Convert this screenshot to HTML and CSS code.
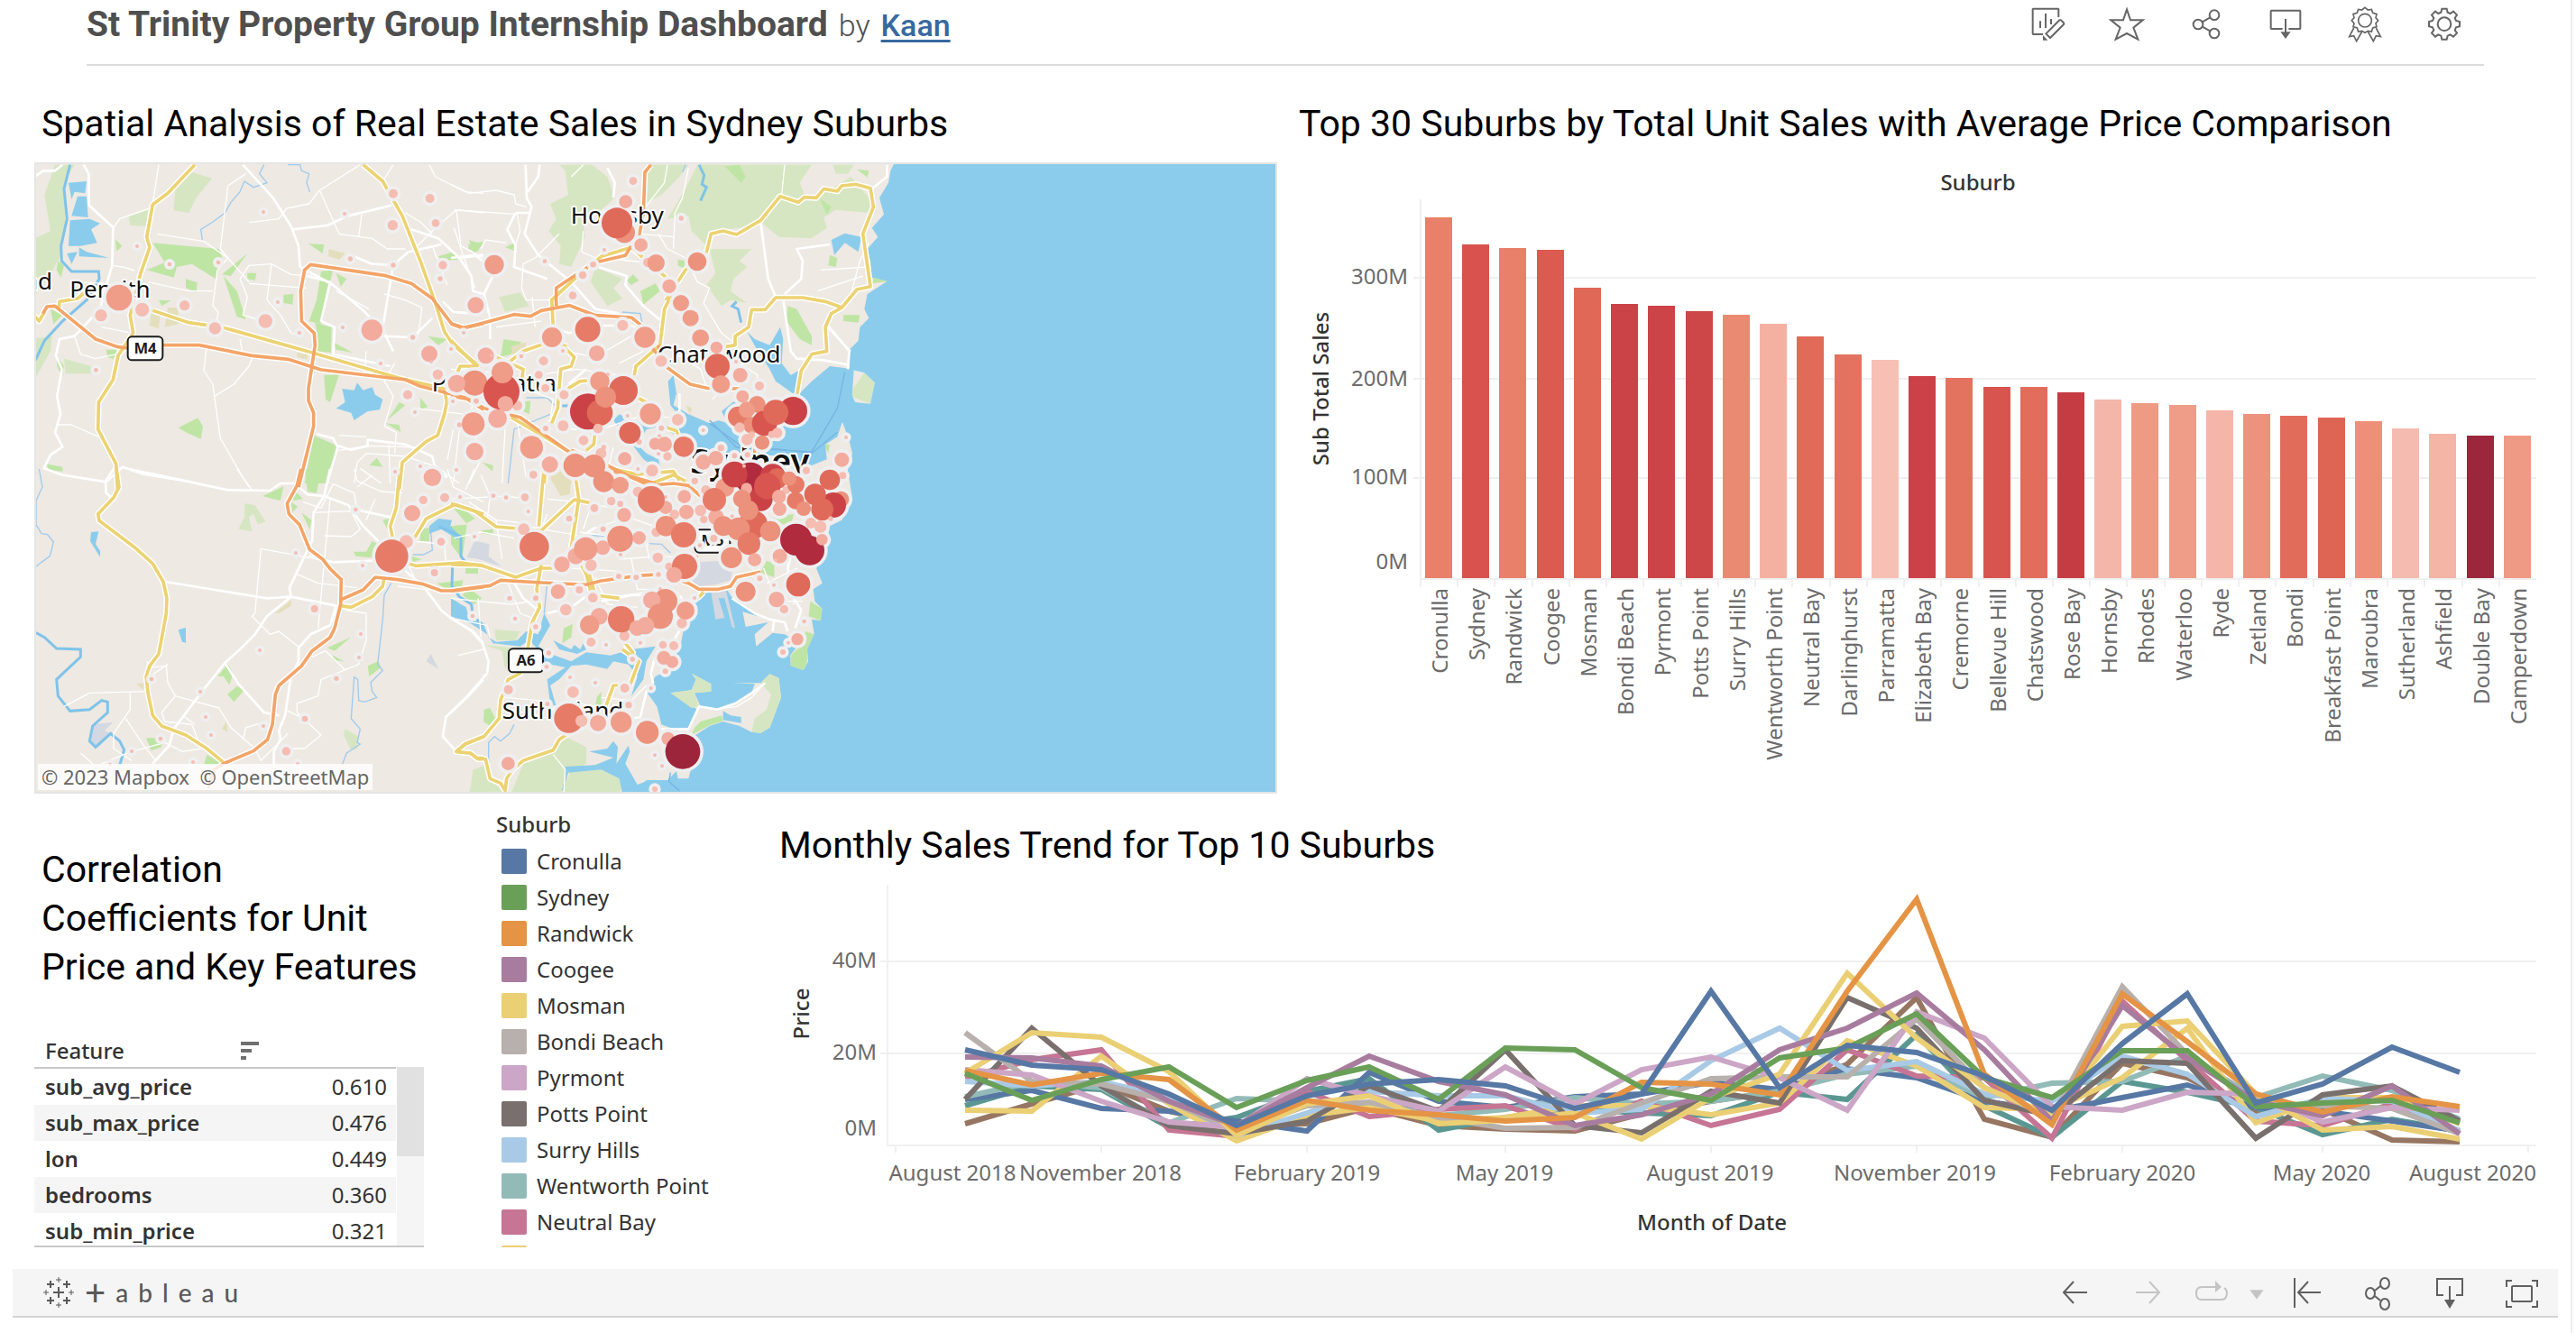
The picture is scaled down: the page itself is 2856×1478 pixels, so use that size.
FILE: index.html
```html
<!DOCTYPE html>
<html lang="en">
<head>
<meta charset="utf-8">
<meta name="viewport" content="width=device-width, initial-scale=1">
<title>St Trinity Property Group Internship Dashboard</title>
<link rel="stylesheet" href="styles.css">
</head>
<body>
<div class="page">
  <header class="header">
    <div class="heading">
      <h1 class="heading-title">St Trinity Property Group Internship Dashboard</h1>
      <span class="heading-by">by</span>
      <a class="heading-author" href="#author">Kaan</a>
    </div>
    <div class="header-actions">
      <button class="icon-button" type="button" aria-label="Edit"><svg class="icon" viewBox="0 0 120 120"><path d="M97 36V10Q97 8 95 8H13Q11 8 11 10V91Q11 93 13 93H45M36 49V72M54 24V72M72 42V60M55 91L100 46Q103 44 106 47L113 54Q116 57 114 60L69 105Z"/><path class="solid" d="M45 96V113H61Z"/></svg></button>
      <button class="icon-button" type="button" aria-label="Favorite"><svg class="icon" viewBox="0 0 120 120"><path d="M60 10L72 46H113L82 71L97 110L60 90L23 110L38 71L7 46H48Z"/></svg></button>
      <button class="icon-button" type="button" aria-label="Share"><svg class="icon" viewBox="0 0 120 120"><circle cx="33" cy="60" r="16"/><circle cx="87" cy="29" r="16"/><circle cx="87" cy="90" r="16"/><path d="M47 52L73 37M47 68L73 82"/></svg></button>
      <button class="icon-button" type="button" aria-label="Download"><svg class="icon" viewBox="0 0 120 120"><path d="M50 75H13Q11 75 11 73V16Q11 14 13 14H107Q109 14 109 16V73Q109 75 107 75H70M60 42V88"/><path class="solid" d="M43 85H77L60 108Z"/></svg></button>
      <button class="icon-button" type="button" aria-label="Badge"><svg class="icon badge" viewBox="0 0 120 120"><circle cx="60" cy="47" r="22"/><path d="M60 4L70 12L82 10L86 22L99 26L96 38L104 47L96 57L99 68L86 72L82 84L70 82L60 88L50 82L38 84L34 72L21 68L24 57L16 47L24 38L21 26L34 22L38 10L50 12Z"/><path d="M23 72L8 101L23 98L32 116L50 84M97 72L112 101L97 98L88 116L70 84"/></svg></button>
      <button class="icon-button" type="button" aria-label="Settings"><svg class="icon" viewBox="0 0 120 120"><circle cx="60" cy="59" r="22"/><path d="M49 20L52 8H68L71 20L80 24L90 17L102 29L95 39L99 48L111 51V67L99 70L95 79L102 89L90 101L80 94L71 98L68 110H52L49 98L40 94L30 101L18 89L25 79L21 70L9 67V51L21 48L25 39L18 29L30 17L40 24Z"/></svg></button>
    </div>
  </header>

  <main>
    <div class="row row-top">
      <section class="panel map-panel">
        <h2 class="panel-title">Spatial Analysis of Real Estate Sales in Sydney Suburbs</h2>
        <div class="map">
        <svg class="chart" viewBox="6 6 4122 2088" role="img" aria-label="Map of Sydney with sales bubbles">
          <defs>
            <g id="minor-roads">
              <g transform="translate(-6 -12)">
                <path d="M420 20L400 150M710 50L650 90L625 300L650 330L615 370L600 490L618 510L610 560M720 212L820 200L845 165L920 150L955 105L1090 20M955 105L1020 250L1130 265L1180 300L1240 300M1095 185L1085 260M270 228L290 200L390 165M415 250L570 275L650 330L720 410M690 400L720 355L795 350L860 385L930 390M720 415L910 430M795 350L780 470L825 520L860 580L900 590M690 400L715 460L700 520L770 540M230 560L320 578M265 355L300 360L340 372M130 410L250 415M385 410L520 440L600 440M580 620L570 705L600 750L605 790L625 930L700 1060L720 1092M605 790L670 750L720 690L735 655M690 600L700 650M80 885L130 885L220 925M1320 20L1340 60L1440 110L1500 115M1500 180L1410 170L1340 230L1280 290M1410 170L1425 290L1500 330M1330 290L1380 420M1010 440L1120 500M1170 450L1240 470L1295 495L1290 540L1280 600M1110 640L1105 710M1205 680L1170 740L1200 790L1170 890L1210 910L1205 980M1270 830L1440 850M1020 920L1110 925M1020 970L1120 955L1290 960M1070 1080L1080 1010L1110 980L1240 990L1330 1020M1090 1030L1160 1080M1400 900L1380 1000M1185 950L1190 1080M1420 900L1400 1080M1340 1020L1420 1080M1200 20L1165 75M1240 180L1290 210L1330 250M140 590L160 650L210 665L280 650"/>
              </g>
              <g transform="translate(1386 -12)">
                <path d="M0 85L60 115L150 105L210 120L215 150L250 160M10 170L220 185L230 240L210 300M100 300L115 270L185 280M80 430L40 320L10 230M360 250L280 330L240 350L235 430L250 470L330 470M440 240L435 310L480 330M500 330L650 345M720 20L710 80L640 170L630 250L740 260M790 30L770 130L745 180L740 300M690 250L720 300L780 330L820 410L860 430L840 480L900 580L950 620M1110 20L1100 120L1030 200M1390 280L1360 340L1330 450L1300 495M1250 560L1330 640M1230 370L1390 360M1220 440L1370 390M0 700L130 710L200 780M120 720L60 850L100 1000L60 1080M240 980L350 1010M230 760L340 800L330 870M380 640L480 660L600 590M150 560L300 540M270 460L280 560M210 730L420 700L560 720M320 870L400 900L470 900M220 870L250 1060M180 900L170 1080M500 900L620 860L740 860M540 960L520 1040L650 1060M750 650L830 700L850 760M960 680L1020 720L1010 800L1070 830M560 680L640 640M960 700L870 800M440 20L400 60"/>
              </g>
              <g transform="translate(-6 1020)">
                <path d="M760 265L1000 310M760 265L740 480L730 490L790 550L820 540L885 592M880 350L950 380L1080 395M990 100L950 530M900 110L960 130L1000 50L1070 80L1080 140M930 145L1060 140L1090 200L1060 225L970 222M1140 100L1110 170M1070 0L1080 40L1160 75L1230 80M1130 20L1080 60M1040 470L1110 480L1110 570L1085 650L1040 668L975 605L930 625M1040 668L960 700L950 755L880 780L880 810L960 885L905 930L840 930M840 800L900 830M680 0L730 70M380 640L395 660L445 655L450 710L475 755L620 795L660 860L740 930L760 970L850 880M475 755L430 810L440 840L530 850L550 900M500 820L540 850M190 745L380 740M105 790L190 745M325 745L325 800L270 880L270 930L330 970M310 830L370 920L410 970M160 945L200 980M230 980L330 940L440 910L500 940L560 930M700 900L710 860L780 840M450 650L390 690M1215 390L1350 405M1250 320L1280 380M1260 240L1370 250L1375 310M1340 370L1330 340M1470 0L1440 70M1380 0L1400 60L1500 110M1415 620L1500 600"/>
              </g>
              <g transform="translate(1386 1020)">
                <path d="M0 100L90 95L180 90L260 100M60 110L150 170L240 180M100 20L130 90L120 170M10 230L100 210L210 230M150 170L170 300M0 430L90 440L200 450L270 440M20 500L120 520L130 560M90 430L100 560M190 380L230 480L280 500M320 150L300 200L420 220M320 100L430 110L540 130M430 210L580 230L660 250M400 330L560 340M470 200L590 160L700 200M460 140L440 200M500 430L650 410L660 480M480 360L520 450L620 460M600 300L620 400L700 400M560 300L700 290L820 300M640 200L660 300M770 100L780 190L860 200M850 100L860 200M900 160L920 300M700 350L760 360M740 520L770 500L800 480M1040 330L1080 440L1170 440M1050 380L1150 330L1140 450M180 760L290 770L330 780M200 800L330 830M500 760L600 770L650 720M420 780L550 800M340 950L380 1000L375 1080M1040 715L1000 760L950 790L880 800M700 400L740 420L750 520"/>
              </g>
            </g>
            <g id="main-roads">
              <g transform="translate(-6 -12)">
                <path d="M0 65L35 40L75 40L100 20M170 20L187 50L188 155L268 228L265 355L240 440L225 500L140 590L90 600L78 655L98 700L82 790L93 850L75 910L100 958L60 985L38 1030L100 1052L245 1075L300 1025L365 1048L500 1070M700 20L800 130L860 225L885 290L890 360L1000 420L1095 500L1165 570L1200 640M865 235L980 222L1050 190L1195 155M1057 320L1130 350L1200 354L1250 310L1360 285M1260 235L1350 265L1420 330L1460 390L1465 440L1500 450M1200 354L1165 560M895 385L990 410L960 540L1005 560L1000 650L1190 690M1150 590L1265 594L1330 530M945 915L1000 930L1015 960L980 1080M1015 955L1060 968L1115 955L1115 935L1240 950L1330 990L1340 1030L1380 1060M1365 475L1400 510L1470 515M1420 330L1500 320"/>
              </g>
              <g transform="translate(1386 -12)">
                <path d="M248 20L252 130L268 160L245 250L290 320L400 410L480 500L560 515M295 20L290 60L255 110M215 180L265 180M215 180L187 235L215 290L210 360L320 400M0 330L80 320L130 360L144 380L110 450L130 530L130 600M520 30L545 80L540 130M490 360L585 390L580 420L640 490L700 540M1030 210L1055 400L1080 460M1110 450L1165 400L1170 340L1150 300L1260 285M1105 470L1130 640L1150 665L1240 670L1320 685M1250 550L1325 640L1320 700M1450 20L1450 60L1400 100M760 780L760 840M390 750L450 700M340 500L340 560L390 580L500 555L600 555L660 580"/>
              </g>
              <g transform="translate(-6 1020)">
                <path d="M270 0L243 40L245 80L270 100M320 0L500 38L650 70L790 72L825 48L870 48L915 85L970 90L990 0M970 90L935 145L930 240L905 290L855 395L860 425L780 490L740 550L690 600L640 645L560 745L470 865L455 920L400 980M440 375L780 430L860 425L1010 455L990 520L925 550L885 595L885 640L860 690L840 820L820 870L825 900L803 940L803 990M920 290L1000 310L1140 305M970 90L1050 120L1100 190L1150 240M1075 135L1190 160M640 645L685 715L770 810L820 820M1230 330L1300 390L1360 470L1390 495L1465 540L1500 580M1500 700L1450 755L1375 825L1365 890L1410 940"/>
              </g>
              <g transform="translate(1386 1020)">
                <path d="M0 495L70 540L105 580L125 640L120 680L55 755L0 810M320 480L400 460L480 400M500 440L600 420L700 420M480 195L440 220L420 290M200 360L240 430L290 470M935 430L1010 480L1060 500L1110 510L1120 540M1070 540L1075 500M1130 290L1120 330L1140 430L1165 470L1145 530M730 400L770 430M770 520L730 590L680 620L665 680L672 710L650 740L630 825L600 830M690 865L790 865L825 790L885 800L945 780L1000 745L1045 712"/>
              </g>
            </g>
            <g id="yellow-roads">
              <g transform="translate(-6 -12)">
                <path d="M540 20L450 115L400 152L380 260L390 295L360 380L325 520L335 580L285 655L268 735L220 810L218 900L278 1015L283 1100M400 505L520 545L640 563L930 645L1220 730L1370 765L1378 810L1370 850L1348 920L1310 940L1230 1010L1220 1100M1100 20L1165 75L1230 190L1290 340L1340 480L1370 575L1400 620L1485 690M0 515L22 540L40 510M88 500L90 475L150 465L180 440"/>
              </g>
              <g transform="translate(1386 -12)">
                <path d="M0 605L85 690L30 690L22 710M150 660L240 700L235 740M340 590L410 660L400 690L365 700L355 830L335 880M195 675L240 640L340 605L385 625M340 560L335 470L400 410L450 365L500 325L600 295L640 330L710 390L740 425L725 470L710 500L695 620L615 690L610 720M715 470L780 370L815 340L850 310L865 250L905 240L950 252L1030 205L1095 125L1155 145L1175 128L1215 130L1240 100L1285 108L1300 90L1345 85L1395 98L1405 160L1370 250L1395 425L1350 435L1300 495L1245 475L1170 462L1080 462L1045 502L1000 502L990 560L945 590L945 620L915 625M1300 495L1265 515L1245 560L1250 640L1200 650L1165 705L1150 790M380 770L430 740L500 735L650 810M200 860L320 930L400 980M310 1080L315 1020M450 970L475 950L480 900M530 1030L620 1050L740 1040L760 1070M720 895L750 905L760 930"/>
              </g>
              <g transform="translate(-6 1020)">
                <path d="M278 -10L288 60L270 95L218 150L222 172L345 265L400 315L435 375L447 430L445 480L420 615L390 655L378 690L385 750L400 820L430 855L510 885L580 930L640 980M1222 0L1210 130L1190 190L1200 240M1270 230L1310 165L1405 118L1500 150M1250 315L1275 322L1425 312L1500 322M1170 360L1165 390L1130 425L1060 460L1025 455M1500 890L1440 915L1410 940L1455 945L1480 962L1500 962"/>
              </g>
              <g transform="translate(1386 1020)">
                <path d="M0 115L80 140L150 192L300 205L410 102L460 112M310 -10L292 190M0 318L100 320L215 360L300 330L350 330M410 0L425 100L400 260L450 350L465 410M300 320L285 400L295 460L270 510L255 600L230 680L190 700L165 770L160 830L110 890L45 915L18 940L65 945L90 965L115 965L130 1030L165 1045L180 1070L185 1030L205 1000L240 970L340 935L360 900L390 880M580 580L605 610L595 640M570 600L625 640L595 720L540 720L515 790M460 350L480 420L560 430M660 50L740 20L780 40M840 410L820 430"/>
              </g>
            </g>
            <g id="orange-roads">
              <g transform="translate(-6 -12)">
                <path d="M35 515L48 492L75 490L210 600L280 625L315 630M435 620L555 620L730 655L850 667L960 702L1240 735L1290 757L1440 795L1500 835M885 1092L935 890L935 845L918 805L918 765L940 620L937 580L895 540L892 440L905 370L925 352L1170 388L1260 415L1330 465L1395 550L1430 563L1500 548"/>
              </g>
              <g transform="translate(1386 -12)">
                <path d="M0 548L45 563L210 518L265 524L300 505L395 488L480 521L600 528L640 560M350 490L350 430L410 390L480 345L580 322L600 290M665 20L645 45L640 180L625 260M640 590L720 695L795 750L850 763L960 765M0 790L60 800L110 830L230 860L400 980M400 970L480 1000L600 1060L660 1080M690 620L700 680M1010 800L1010 990M540 1040L680 1080"/>
              </g>
              <g transform="translate(-6 1020)">
                <path d="M893 0L880 55L847 115L853 150L888 185L922 268L965 300L990 332L1027 368L1025 450L1005 530L990 560L930 605L895 655L820 720L808 750L798 850L782 900L735 938L640 978L605 1000L585 1060M1025 435L1100 402L1140 360L1215 368L1300 383L1360 405L1405 405L1500 392"/>
              </g>
              <g transform="translate(1386 1020)">
                <path d="M0 405L130 388L165 370L300 378L450 385L500 372L620 355L700 350L790 380L825 400L890 400L930 390L950 360L1030 342M540 0L660 55L740 48L790 55L830 90M820 290L770 350"/>
              </g>
            </g>
          </defs>

          <rect class="land" width="4134" height="2100"/>

          <g class="forest">
            <path transform="translate(-6 -12)" d="M75 20H140L105 80L110 230L95 320L50 400L15 440L0 500V270L60 240L40 120ZM530 45L597 65L545 130L520 180L470 172L475 100ZM320 190L385 165L380 225L325 222ZM105 665L195 690L200 715L110 715ZM0 600L65 590L60 640L15 720L0 740Z"/>
            <path transform="translate(1386 -12)" d="M470 20L520 60L545 130L500 170L440 200L445 260L400 360L360 350L365 290L325 240L350 200L330 150L390 120L380 40L360 20ZM660 20H790L760 60L700 120L645 150L640 70ZM820 20H1200L1160 80L1180 130L1250 110L1330 60L1400 140L1395 180L1280 170L1240 195L1250 230L1200 265L1090 260L1030 210L960 230L860 240L850 290L800 240L790 190L720 200L780 100ZM1270 20H1340L1320 50L1280 50ZM860 300L1000 300L960 340L985 360L940 400L930 440L985 480L930 470L900 490L850 420L880 380ZM480 360L570 400L540 430L570 465L520 490L465 410ZM160 460L230 445L260 490L180 510ZM1340 760L1375 712L1410 745L1395 815L1330 790Z"/>
            <path transform="translate(-6 1020)" d="M705 115L740 120L775 175L750 185L735 150L720 160L730 208L685 200L705 160ZM1040 865L1085 890L1080 930L1060 935L1035 885ZM1500 990L1465 1000L1455 1080H1500Z"/>
            <path transform="translate(1386 1020)" d="M145 535L230 540L215 570L150 570ZM110 585L250 600L190 640L180 665L170 605ZM80 1000L120 980L150 1050L180 1080H60ZM240 980L340 940L380 890L450 925L450 980L390 1010L380 1080H200ZM400 1000L540 970L580 1030L560 1080H370Z"/>
          </g>
          <g class="park">
            <path transform="translate(-6 -12)" d="M400 280L620 300L630 325L610 400L570 375L530 350L480 360L470 395L380 370L440 345ZM510 400L548 412L545 445L510 430ZM635 390L680 440L710 535L680 525ZM715 315L660 390L630 385L690 335ZM715 380H745L740 405L715 400ZM835 452L868 450L865 485L835 480ZM275 268L298 290L280 308ZM918 283L970 285L965 315ZM960 375L1000 370L985 430L960 550L920 540L945 470ZM940 545L995 560L993 645L945 640L950 600ZM1010 380L1045 400L1025 425ZM970 720L1020 718L990 810L975 800ZM1450 285L1500 275L1480 310L1450 300ZM1350 325L1400 310L1415 335L1360 340ZM935 920L1015 955L975 1080H905ZM485 895L550 862L567 890L560 932L510 910ZM1180 870L1240 820L1220 810ZM1175 880L1220 885L1225 910ZM1290 795L1315 825L1290 835ZM1120 1020L1145 995L1165 1025ZM1315 590L1380 600L1350 620ZM80 655L105 690L98 725L82 690ZM245 635H280L270 665L250 660ZM60 500L100 520L70 550ZM420 470L460 472L430 490ZM45 1015L100 1025L100 1040L55 1035ZM85 340L105 355L95 395L80 370ZM1000 610L1065 645L1010 635Z"/>
            <path transform="translate(1386 -12)" d="M60 270L105 285L75 315ZM180 295L210 280L210 305ZM175 600L235 610L200 650L165 660ZM910 25L960 20L980 60L965 80ZM1120 490L1150 500L1200 590L1200 620L1160 600L1115 540ZM1225 130L1265 160L1250 185ZM1260 320L1285 330L1280 360L1255 355ZM1305 520H1360L1355 545L1305 540ZM1350 35L1390 40L1385 62ZM630 440L680 415L695 440L640 485ZM585 405L605 385L625 405L600 420ZM755 335L780 340L775 365L755 355ZM105 1010L140 1020L138 1040ZM240 810L265 805L260 850L240 840ZM1240 950L1260 950L1255 980Z"/>
            <path transform="translate(-6 1020)" d="M905 0H960L945 80L915 75ZM765 90L835 58L825 105L800 100ZM870 70L900 100L865 105ZM860 110L882 125L865 145ZM895 145L928 170L922 200ZM1068 275L1110 275L1130 240L1150 250L1130 295L1075 290ZM615 690L650 648L668 680L655 718L635 690ZM648 750L680 722L705 735L670 775ZM378 895L425 895L430 925L395 937ZM580 950L640 985H570ZM980 595L1058 560L1005 605ZM1000 620L1035 640L1000 635ZM1115 655L1150 640L1160 660L1120 690ZM1400 130L1440 135L1470 165L1445 180ZM1395 190L1445 185L1430 290L1400 250ZM1345 380L1430 370L1425 395H1370ZM1440 330L1480 325V345L1440 348ZM1450 395L1495 430L1470 450L1430 420ZM1290 200L1320 195V240L1290 240ZM1165 170L1185 165L1180 200ZM1260 290L1295 300L1265 310Z"/>
            <path transform="translate(1386 1020)" d="M10 130L40 135L80 165L50 180ZM0 190L50 185L30 290L0 250ZM0 380L40 370L35 395ZM55 330L90 325V348L50 348ZM375 530L405 515L400 560L370 580ZM110 800L130 795L148 830L130 855L108 840ZM485 760L500 740L500 800L480 790ZM1050 305L1075 315L1075 360L1030 345ZM1070 160L1140 150L1130 190L1090 180ZM1195 440L1235 465L1230 505L1190 490ZM1180 540L1208 550L1185 600V640L1172 670L1130 655V620L1160 590ZM100 205L140 200L140 220L105 215Z"/>
          </g>
          <g class="sand">
            <path transform="translate(-6 -12)" d="M985 300L1040 315L1020 335L985 325ZM395 505L425 515L420 565L390 555ZM450 495H485V550L440 560ZM880 645L915 650V668L880 660Z"/>
            <path transform="translate(1386 -12)" d="M200 625L250 610L245 640L205 655ZM330 1050L400 1030V1080H340ZM780 820L803 830L795 850Z"/>
            <path transform="translate(-6 1020)" d="M805 480L862 435L860 455L820 480ZM345 715L372 710L368 735ZM630 865L645 840L650 875Z"/>
            <path transform="translate(1386 1020)" d="M330 30L400 25L395 85L365 90Z"/>
          </g>
          <g class="built">
            <path transform="translate(-6 1020)" d="M200 850L268 842L240 870L260 880L220 925L195 915ZM1310 640L1325 615L1350 665ZM1470 240L1500 245V300L1445 295Z"/>
            <path transform="translate(1386 1020)" d="M80 240L128 250L125 290L170 325L60 290ZM820 310L900 305L935 340L930 370L880 385L820 390L800 370Z"/>
          </g>

          <g class="water">
            <path transform="translate(-6 -12)" d="M120 80L180 75L175 115L140 110L130 135ZM150 125H180L185 195L130 190ZM125 205L190 200L225 215L195 235L215 280L160 290H120ZM115 315L150 310L130 350ZM155 295L180 310L255 330L155 325ZM1010 830L1040 810L1030 765L1070 770L1080 745L1100 770L1130 760L1140 785L1165 800L1155 835L1115 840L1070 870L1060 845Z"/>
            <path transform="translate(-6 1020)" d="M195 210L220 208L210 250L225 272V293L192 240ZM485 535L510 528V578L498 575ZM1320 190L1350 165L1395 170L1390 190L1420 220L1415 235L1360 200L1320 215Z"/>
            <path transform="translate(1386 -12)" d="M1482 0L1462 40L1455 80L1425 130L1440 185L1400 230L1420 260L1385 300L1395 340L1400 395L1450 408L1385 450L1375 500L1390 530L1360 560L1355 605L1325 635L1325 700L1375 712L1410 745L1395 815L1345 810L1325 770L1300 870L1325 940L1335 980L1320 1040L1328 1080H2748V0ZM1265 270L1310 248L1365 260L1355 310L1310 280L1275 320Z"/>
            <path transform="translate(1386 -12)" d="M985 575L1010 600L1060 620L1095 560L1105 600L1100 680L1130 720L1165 700L1160 780L1200 740L1260 690L1340 700L1330 850L1300 880L1285 925L1245 950L1250 1000L1200 1020L1120 995L1050 985L960 990L900 975L850 990L790 1000L780 940L700 890L650 900L620 950L650 980L690 1000L700 1040L640 1000L610 960L540 870L560 850L600 870L640 880L740 890L770 870L730 820L722 740L740 720L750 780L740 820L790 850L860 880L890 870L920 880L900 840L950 800L1000 810L1060 800L1150 790L1080 740L1060 700L1020 640Z"/>
            <path transform="translate(1386 1020)" d="M1320 0L1335 100L1300 170L1260 190L1245 270L1215 330L1235 380L1205 400L1210 440L1235 465L1230 505L1200 500L1208 550L1185 600L1188 640L1172 670L1130 655L1128 620L1160 580L1110 550L1070 545L1015 590L1010 550L1055 510L980 525L970 475L1020 490L940 435L920 405L830 415L780 500L765 580L730 665L680 690L650 740L685 790L700 850L740 865H790L820 800L730 745L800 735L815 700L800 680L865 715V740L810 745L830 790L880 800L950 780L1000 745L1010 715L935 712H1030L1060 682L1090 695L1098 760L1060 860L1030 878L1000 875L960 855L905 840L860 855L790 900L830 930L800 990L790 1030H755L750 1005L720 1035L650 1035L600 1080H2748V0Z"/>
            <path transform="translate(1386 1020)" d="M0 430L50 460L60 495L110 520L125 560L150 575L220 570L250 540L290 550L310 480L330 520L290 590L345 620L400 640L450 610L530 620L600 600L680 590L650 640L640 700L600 755L620 690L590 650L540 640L520 665L450 650L400 655L360 700L330 720L350 790L330 780L320 700L380 660L280 640L300 610L260 570L230 590L140 580L120 550L60 510L0 490ZM340 570L400 600L410 585L430 600L440 580L450 600L420 615L360 600ZM460 940L520 930L540 905L555 925L550 980L590 920L595 940L580 980L620 1050L660 1035L610 1080H570L560 1030L500 1000L390 1010L380 1040V990L480 985L540 960ZM905 805L930 820L965 825V845L905 835Z"/>
          </g>
          <g class="forest">
            <path transform="translate(1386 1020)" d="M1060 682L1090 695L1098 760L1060 860L1030 878L1000 875L1010 830L1050 800L1065 750L1030 712ZM800 680L865 715V740L810 745L825 790L800 795L730 745L800 735L815 700Z"/>
          </g>
          <path class="park" transform="translate(1386 1020)" d="M810 860L830 840L900 820L905 838L860 853L800 885Z"/>
          <path class="park" transform="translate(1386 -12)" d="M1405 395L1452 408L1400 415Z"/>
          <path class="built" transform="translate(1386 1020)" d="M865 410L915 405L945 530L935 525L910 430H890L910 495L880 500Z"/>
          <g class="river">
            <path class="river-wide" transform="translate(-6 -12)" d="M125 20L105 100L115 200L95 290L97 340L130 375L220 375L222 400L180 470L100 540L40 605L10 670"/>
            <path transform="translate(-6 -12)" d="M770 20L755 50L780 80L735 95L705 75L690 110L660 145L640 180L600 210L560 235L565 270M850 20H890L895 40L920 50L912 80L922 110"/>
            <path transform="translate(-6 1020)" d="M22 0L33 60L12 105V185L30 215L50 218L70 243L58 290L30 310L12 325M1193 380L1170 420L1165 500L1148 650L1165 670L1125 710L1130 740L1145 760L1105 775L1085 770L1082 700L1070 692L1060 830L1090 865L1080 910L1090 915L1045 945L1030 985M1265 285L1300 285L1330 270L1325 210"/>
            <path class="river-wide" transform="translate(-6 1020)" d="M12 545L40 560L80 597L160 600V625L80 700L85 755L125 805L190 800L230 770L250 775V810L200 855L190 905L210 925L260 880L290 905L305 935L290 985M1397 325L1395 390L1420 425L1460 450L1465 490L1500 520M1350 190L1425 225V290L1440 310"/>
            <path transform="translate(1386 -12)" d="M780 20L770 45M190 1080L210 900L330 850M250 795L320 795L345 820M690 620L730 700M570 510L630 515L635 545"/>
            <path class="ferry" transform="translate(1386 -12)" d="M860 870L950 960L1200 975L1285 830L1310 710M830 990L1080 965L1200 980L1285 910M860 880L1000 980"/>
            <path class="river-wide" transform="translate(1386 -12)" d="M825 20L842 55L835 85L850 95L830 140M950 475L935 490L955 500L965 545M370 822H420"/>
            <path transform="translate(1386 1020)" d="M320 380L310 480M125 980V910L145 890L165 905L195 880L210 850M440 220L560 225M480 240L700 250L730 280M370 1070L390 1000"/>
            <path class="ferry" transform="translate(1386 1020)" d="M730 1010L725 1040L760 1070"/>
          </g>

          <use class="road-minor" href="#minor-roads"/>
          <use class="road-main" href="#main-roads"/>
          <use class="road-casing" href="#yellow-roads"/>
          <use class="road-casing" href="#orange-roads"/>
          <use class="road-yellow" href="#yellow-roads"/>
          <use class="road-orange" href="#orange-roads"/>

          <g class="place">
            <text x="-36" y="422">nd</text>
            <text x="118" y="450">Penrith</text>
            <text x="1784" y="204">Hornsby</text>
            <text x="1322" y="762">Parramatta</text>
            <text x="2072" y="666">Chatswood</text>
            <text x="1556" y="1850">Sutherland</text>
            <text class="place-city" x="2182" y="1034">Sydney</text>
          </g>
          <g class="shield">
            <rect x="311" y="580" width="116" height="78" rx="14"/><text x="369" y="636">M4</text>
            <rect x="1578" y="1618" width="114" height="78" rx="14"/><text x="1635" y="1674">A6</text>
            <rect x="2198" y="1222" width="116" height="76" rx="14"/><text x="2256" y="1276">M5</text>
          </g>
          <g class="halo" id="halos"></g>
          <g id="bubbles"></g>
        </svg>
        <p class="credit">© 2023 Mapbox&nbsp; © OpenStreetMap</p>
        </div>
      </section>

      <section class="panel">
        <h2 class="panel-title flush">Top 30 Suburbs by Total Unit Sales with Average Price Comparison</h2>
        <svg class="chart" id="bar-chart" viewBox="1440 180 1380 700" role="img" aria-label="Bar chart of sub total sales by suburb">
          <text class="axis-title" x="2193" y="211">Suburb</text>
          <text class="axis-title" transform="translate(1473 431) rotate(-90)">Sub Total Sales</text>
          <path class="grid" d="M1567 308H2812M1567 420H2812M1567 530H2812"/>
          <path class="axis" d="M1575 221V642H2812"/>
          <g class="tick tick-end">
            <text x="1561" y="315">300M</text>
            <text x="1561" y="428">200M</text>
            <text x="1561" y="537">100M</text>
            <text x="1561" y="631">0M</text>
          </g>
        </svg>
      </section>
    </div>

    <div class="row row-bottom">
      <section class="correlation">
        <h2 class="panel-title">Correlation Coefficients for Unit Price and Key Features</h2>
        <div class="table-wrap">
          <table class="features">
            <thead>
              <tr><th scope="col" class="name-cell">Feature</th><th scope="col" class="sort-cell"><svg class="sort" viewBox="0 0 20 22" role="img" aria-label="Sorted descending"><path d="M0 3H20M0 11H12M0 19H6"/></svg></th></tr>
            </thead>
            <tbody>
              <tr><th scope="row">sub_avg_price</th><td>0.610</td></tr>
              <tr><th scope="row">sub_max_price</th><td>0.476</td></tr>
              <tr><th scope="row">lon</th><td>0.449</td></tr>
              <tr><th scope="row">bedrooms</th><td>0.360</td></tr>
              <tr><th scope="row">sub_min_price</th><td>0.321</td></tr>
            </tbody>
          </table>
          <div class="scrollbar"><div class="thumb"></div></div>
        </div>
      </section>

      <section class="legend">
        <h3 class="legend-title">Suburb</h3>
        <ul class="legend-list">
          <li><span class="swatch cronulla"></span>Cronulla</li>
          <li><span class="swatch sydney"></span>Sydney</li>
          <li><span class="swatch randwick"></span>Randwick</li>
          <li><span class="swatch coogee"></span>Coogee</li>
          <li><span class="swatch mosman"></span>Mosman</li>
          <li><span class="swatch bondi"></span>Bondi Beach</li>
          <li><span class="swatch pyrmont"></span>Pyrmont</li>
          <li><span class="swatch potts"></span>Potts Point</li>
          <li><span class="swatch surry"></span>Surry Hills</li>
          <li><span class="swatch wentworth"></span>Wentworth Point</li>
          <li><span class="swatch neutral"></span>Neutral Bay</li>
          <li><span class="swatch mosman"></span></li>
        </ul>
      </section>

      <section class="trend">
        <h2 class="panel-title flush">Monthly Sales Trend for Top 10 Suburbs</h2>
        <svg class="chart" id="line-chart" viewBox="864 964 1956 419" role="img" aria-label="Line chart of monthly sales">
          <path class="grid" d="M976 1066H2812M976 1168H2812"/>
          <path class="axis" d="M984 981V1270H2812"/>
          <g class="tick tick-end">
            <text x="972" y="1073">40M</text>
            <text x="972" y="1175">20M</text>
            <text x="972" y="1259">0M</text>
            <text x="2812" y="1309">August 2020</text>
          </g>
          <g class="tick tick-middle">
            <text x="1056" y="1309">August 2018</text>
            <text x="1220" y="1309">November 2018</text>
            <text x="1449" y="1309">February 2019</text>
            <text x="1668" y="1309">May 2019</text>
            <text x="1896" y="1309">August 2019</text>
            <text x="2123" y="1309">November 2019</text>
            <text x="2353" y="1309">February 2020</text>
            <text x="2574" y="1309">May 2020</text>
          </g>
          <text class="axis-title" x="1898" y="1364">Month of Date</text>
          <text class="axis-title" transform="translate(897 1124) rotate(-90)">Price</text>
        </svg>
      </section>
    </div>
  </main>

  <footer class="toolbar">
    <a class="brand" href="#tableau" aria-label="tableau">
      <svg class="brand-mark" viewBox="0 0 36 36"><path d="M18 12V24M12 18H24"/><path d="M9 5V13M5 9H13M27 5V13M23 9H31M9 23V31M5 27H13M27 23V31M23 27H31"/><path class="thin" d="M18 1V7M15 4H21M18 29V35M15 32H21M4 15V21M1 18H7M32 15V21M29 18H35"/></svg>
      <span class="brand-name"><span class="cross">+</span><span>a</span><span>b</span><span>l</span><span>e</span><span>a</span><span>u</span></span>
    </a>
    <div class="toolbar-actions">
      <button class="tool" type="button" aria-label="Undo"><svg class="icon" viewBox="0 0 40 40"><path d="M7 20H33M18 8L7 20L18 32"/></svg></button>
      <button class="tool off" type="button" aria-label="Redo"><svg class="icon" viewBox="0 0 40 40"><path d="M7 20H33M22 8L33 20L22 32"/></svg></button>
      <button class="tool off replay" type="button" aria-label="Replay"><svg class="icon" viewBox="0 0 40 40"><path d="M26 14H9Q3 14 3 21Q3 28 9 28H31Q37 28 37 20Q37 17 34 15"/><path class="solid" d="M24 7V20L31 14Z"/></svg></button>
      <button class="tool off caret" type="button" aria-label="Replay speed"><svg class="icon" viewBox="0 0 40 40"><path class="solid" d="M12 17H28L20 28Z"/></svg></button>
      <button class="tool reset" type="button" aria-label="Reset"><svg class="icon" viewBox="0 0 40 40"><path d="M5 4V37M9 20H34M20 8L9 20L20 32"/></svg></button>
      <button class="tool" type="button" aria-label="Share"><svg class="icon" viewBox="0 0 40 40"><ellipse cx="12" cy="21" rx="5" ry="6"/><ellipse cx="28" cy="10" rx="5" ry="6"/><ellipse cx="28" cy="33" rx="5" ry="6"/><path d="M17 18L23 13M17 24L23 29"/></svg></button>
      <button class="tool" type="button" aria-label="Download"><svg class="icon" viewBox="0 0 40 40"><path d="M13 23H6V5H34V23H27M20 13V30"/><path class="solid" d="M14 28H26L20 38Z"/></svg></button>
      <button class="tool" type="button" aria-label="Full screen"><svg class="icon" viewBox="0 0 40 40"><rect x="9" y="13" width="22" height="17" rx="1"/><path d="M3 14V7H9M31 7H37V14M37 29V36H31M9 36H3V29"/></svg></button>
    </div>
  </footer>
</div>
<script src="charts.js"></script>
</body>
</html>
```
FILE: styles.css
```css
* { box-sizing: border-box; }
body {
  margin: 0;
  background: #fff;
  color: #333;
  font-family: "Noto Sans", "Open Sans", sans-serif;
  font-size: 24px;
  line-height: 32px;
}
h1, h2, h3, p, ul { margin: 0; padding: 0; font-weight: 400; }
button { border: 0; background: none; padding: 0; color: inherit; cursor: pointer; }

.page {
  min-height: 100vh;
  margin-right: 4px;
  border-right: 2px solid #ececec;
}

/* Header */
.header {
  display: flex;
  justify-content: space-between;
  align-items: flex-start;
  height: 73px;
  margin: 0 96px;
  border-bottom: 2px solid #dcdcdc;
  color: #4f4f4f;
  font-family: Roboto, sans-serif;
}
.heading { display: flex; align-items: baseline; gap: 12px; line-height: 54px; }
.heading-title { font-size: 39px; font-weight: 700; }
.heading-by { font-size: 34px; font-weight: 300; }
.heading-author { color: #37699f; font-size: 34px; font-weight: 500; text-decoration-thickness: 3px; text-underline-offset: 4px; }
.header-actions { display: flex; color: #666; }
.icon-button { display: flex; justify-content: center; width: 88px; padding-top: 7px; }
.icon { width: 40px; height: 40px; fill: none; stroke: currentColor; stroke-width: 2; }
.header-actions .icon { stroke-width: 6; }
.header-actions .badge { stroke-width: 5; }
.icon .solid { fill: currentColor; stroke: none; }

/* Dashboard grid */
main { padding: 0 30px 0 38px; }
.row { display: grid; }
.row-top { grid-template-columns: 1402fr 1380fr; padding-top: 37px; }
.row-bottom { grid-template-columns: 512fr 314fr 1956fr; }
.map-panel { padding-right: 24px; }
.panel-title {
  padding-left: 8px;
  color: #000;
  font-family: Roboto, sans-serif;
  font-size: 41px;
  font-weight: 400;
  line-height: 54px;
}
.panel-title.flush { padding-left: 0; }
.panel .panel-title { margin-bottom: 16px; }
.chart { display: block; width: 100%; height: auto; }

/* Map */
.map { position: relative; border: 2px solid #e5e5e5; }
.land { fill: #eee9e3; }
.forest { fill: #d6e6c2; }
.park { fill: #bfe5a5; }
.sand { fill: #e3dfbd; }
.built { fill: #d4d8e1; }
.water { fill: #8bccec; }
.river { fill: none; stroke: #9fcbee; stroke-width: 4; }
.river-wide { stroke: #7fc3ea; stroke-width: 9; }
.ferry { stroke: #76b4e2; }
.road-minor, .road-main, .road-casing, .road-yellow, .road-orange { fill: none; stroke: #fff; stroke-linejoin: round; }
.road-minor { stroke-width: 4; }
.road-main { stroke-width: 8; }
.road-casing { stroke-width: 20; }
.road-yellow { stroke: #ecd272; stroke-width: 11; }
.road-orange { stroke: #f4a468; stroke-width: 11; }
.place { fill: #111; stroke: #fff; stroke-width: 12; stroke-linejoin: round; paint-order: stroke; font-size: 78px; }
.place-city { font-size: 114px; font-weight: 600; }
.shield rect { fill: #fff; stroke: #1d1d1d; stroke-width: 6; }
.shield text { fill: #1d1d1d; font-size: 50px; font-weight: 700; text-anchor: middle; }
.halo { fill: #efeff0; }
.credit {
  position: absolute;
  left: 2px;
  bottom: 2px;
  padding: 0 4px;
  background: rgba(255, 255, 255, .8);
  color: #666;
  font-size: 22px;
  line-height: 29px;
}

/* Charts */
.grid { fill: none; stroke: #f0f0f0; stroke-width: 2; }
.axis { fill: none; stroke: #f0f0f0; stroke-width: 2; }
.tick { fill: #6b6b6b; font-size: 24px; }
.tick-end { text-anchor: end; }
.tick-middle { text-anchor: middle; }
.axis-title { fill: #333; font-size: 24px; font-weight: 500; text-anchor: middle; }
.series { fill: none; stroke-width: 6; }

/* Correlation table */
.correlation { padding: 57px 80px 0 0; }
.table-wrap { display: flex; height: 236px; margin-top: 48px; overflow: hidden; border-bottom: 2px solid #c8c8c8; }
.features { flex: 1; border-collapse: separate; border-spacing: 0; table-layout: fixed; }
.features .name-cell { width: 57%; }
.features th, .features td { height: 40px; padding: 0 10px 0 12px; text-align: left; font-weight: 600; }
.features td { text-align: right; font-weight: 400; }
.features thead th { height: 38px; border-bottom: 2px solid #c8c8c8; font-weight: 500; }
.features thead .sort-cell { padding-left: 0; }
.features tbody tr:nth-child(even) { background: #f5f5f5; }
.sort { display: block; width: 20px; height: 22px; fill: none; stroke: #707070; stroke-width: 4; }
.scrollbar { width: 30px; margin: 36px 0 0 1px; background: #f5f5f5; }
.thumb { height: 50%; background: #e1e1e1; }

/* Legend */
.legend { padding-top: 18px; }
.legend-title { font-size: 24px; font-weight: 500; }
.legend-list { height: 453px; padding: 5px 0 0 6px; overflow: hidden; list-style: none; }
.legend-list li { display: flex; align-items: center; gap: 11px; height: 40px; }
.swatch { width: 28px; height: 28px; border-radius: 2px; }
.cronulla { background: #5778a4; }
.sydney { background: #6a9f58; }
.randwick { background: #e49444; }
.coogee { background: #a87c9f; }
.mosman { background: #ebcf74; }
.bondi { background: #b8b0ac; }
.pyrmont { background: #cca6c6; }
.potts { background: #79706e; }
.surry { background: #a9cae6; }
.wentworth { background: #92bbb8; }
.neutral { background: #c67594; }

.trend { padding-top: 30px; }

/* Toolbar */
.toolbar {
  display: flex;
  justify-content: space-between;
  align-items: center;
  height: 54px;
  margin: 24px 14px 0;
  background: #f5f5f5;
  border-bottom: 2px solid #d3d3d3;
  color: #666;
}
.brand { display: flex; align-items: center; gap: 11px; padding-left: 33px; color: #595959; text-decoration: none; }
.brand-mark { width: 36px; height: 36px; fill: none; stroke: currentColor; stroke-width: 2; }
.brand-mark .thin { stroke-width: 1; }
.brand-name { display: flex; align-items: center; gap: 11px; font-family: Lato, sans-serif; font-size: 28px; font-weight: 500; line-height: 40px; }
.brand-name .cross { font-size: 40px; }
.toolbar-actions { display: flex; }
.tool { display: flex; justify-content: center; width: 80px; color: #606060; }
.tool.off { color: #c4c4c4; }
.tool.replay { width: 62px; }
.tool.caret { width: 38px; }
.tool.reset { width: 75px; }
```
FILE: charts.js
```js
const NS = "http://www.w3.org/2000/svg";
function add(parent, name, attrs, text) {
  const el = document.createElementNS(NS, name);
  for (const key in attrs) el.setAttribute(key, attrs[key]);
  if (text) el.textContent = text;
  parent.appendChild(el);
  return el;
}

// Average price ramp, low to high
const RAMP = {
  a: "#f5bcb1", b: "#f2ab9d", c: "#ef9d89", d: "#ec917b", e: "#e67c68",
  f: "#e06a59", g: "#d9554f", h: "#cb4246", i: "#b02b3e", j: "#9d253b"
};

// Sales bubbles by map tile: "x,y,radius,colour"
const TILES = [
  { dx: -6, dy: -12, points: "768,177,6 1038,183,6 1200,116,15 1322,132,15 1198,221,17 1341,214,13 348,291,6 456,351,7 618,345,7 1057,333,8 1200,354,8 1365,354,14 1356,399,8 228,521,20 365,502,23 288,462,43,c 506,488,17 607,564,20 816,477,6 775,540,23 888,579,6 1032,561,6 1129,570,35,b 1265,594,8 1320,649,27,b 1326,675,6 1158,681,6 1348,718,17 1248,785,15 1272,843,6 211,703,7 1290,1023,6" },
  { dx: 1386, dy: -12, points: "606,74,13 581,143,22,b 577,245,35,d 552,214,51,f 632,287,22,b 766,198,8 510,303,6 655,345,16 682,347,29,c 819,342,31,d 473,352,10 438,387,13 312,341,7 144,352,32,c 82,487,27,b 405,455,13 726,424,23,b 765,480,27,c 797,530,27,c 830,596,28,c 962,720,24,b 883,628,20,b 886,690,41,f 898,750,30,c 699,673,19 571,554,18 645,594,35,c 455,568,42,e 336,594,33,c 485,647,26,b 372,639,6 234,657,7 308,673,15 292,719,13 116,655,27,b 135,655,6 42,579,6 0,633,6 79,746,42,d 19,748,29,b 220,821,17 168,775,60,g 171,711,36,c 181,815,26,b 155,864,31,b 84,806,9 6,807,6 314,763,13 376,785,15 495,740,32,c 522,717,6 456,841,60,h 495,845,43,f 573,771,48,f 514,793,35,d 489,897,16 373,888,18 315,897,9 441,937,16 74,882,38,c 28,885,8 79,974,29,b 587,855,6 663,849,35,c 626,942,9 595,912,36,f 754,868,19 700,896,9 693,922,6 679,948,20,b 710,950,25,b 774,958,34,e 690,982,6 720,990,14 499,980,18 508,960,8 578,998,22,b 669,1037,20 622,1032,6 268,960,38,c 329,1017,27,b 274,1051,13 413,1020,39,d 475,1022,38,d 18,1035,6 839,903,6 1026,756,15 948,675,6 970,791,21,b 955,858,34,e 1018,817,28,d 984,835,27,c 1138,839,47,h 1000,886,28,d 1043,880,42,g 1080,844,42,f 960,894,17 1000,918,11 1067,917,12 1085,912,17 985,934,19 1035,944,24,d 898,962,11 943,988,9 986,985,9 839,1009,25,b 881,996,24,b 1314,927,6 1300,1001,24,b" },
  { dx: -6, dy: 1020, points: "1206,9,6 1330,28,29,b 1300,103,14 1371,95,15 1263,147,27,b 1075,135,7 876,279,6 1098,321,6 1243,242,22 1195,290,55,e 1359,242,13 1337,345,12 938,465,12 1092,549,6 1086,627,6 1011,697,8 756,603,6 396,699,7 558,741,6 576,825,6 594,885,6 768,855,6 906,831,10 844,939,14 882,981,6 534,975,6 426,897,7 330,939,6 258,983,6" },
  { dx: 1386, dy: 1020, points: "30,93,6 141,89,7 183,95,7 246,94,13 257,141,6 242,200,19 277,258,49,e 393,165,10 477,130,13 508,42,35,d 563,54,28,c 533,107,14 563,116,10 576,153,23,b 506,200,9 563,232,43,d 626,229,22,b 505,262,24,b 415,290,27,b 448,266,39,c 369,317,26,b 466,320,19 564,285,6 622,76,17 714,128,22,b 714,93,6 666,102,45,e 743,151,16 776,92,22,b 783,143,24,b 683,210,16 715,190,34,d 774,219,42,e 688,295,17 725,324,13 777,324,42,e 742,352,26,b 690,351,8 696,399,6 616,361,9 558,357,9 356,408,24,b 427,402,12 472,428,16 382,468,19 195,430,8 282,430,9 213,498,7 282,525,8 72,489,7 78,225,6 810,429,6 713,439,40,d 668,436,29,b 696,490,42,d 768,513,17 780,471,30,c 493,490,28,b 461,519,32,c 577,555,17 566,500,44,e 647,521,29,b 619,529,26,b 466,576,15 516,585,6 630,578,6 705,585,13 741,588,15 708,628,23,b 736,642,20,b 713,673,9 604,633,8 325,612,8 318,658,7 396,693,6 480,711,6 191,734,15 406,742,19 578,729,15 591,785,11 665,729,6 392,829,49,e 434,838,20 489,845,27,b 321,782,7 566,842,35,c 653,876,38,d 722,897,22,b 771,940,58,j 678,952,6 702,988,6 678,1065,9 190,980,22,b 811,40,11 848,70,16 830,138,19 841,168,13 882,160,26,b 911,62,31,c 876,102,39,e 996,30,52,i 943,18,43,h 1070,25,42,h 1085,32,34,f 1030,100,40,h 1052,57,44,g 983,65,19,b 968,99,30,d 1005,185,48,f 989,137,33,d 906,190,33,d 956,199,38,d 991,248,38,e 1062,207,34,d 874,231,12 828,254,7 935,157,6 933,295,35,d 1010,302,22,b 1094,290,24,b 1080,303,6 1115,70,13 1091,92,23,b 1147,52,29,e 1125,32,24,d 1093,133,23,b 1146,105,29,e 1173,132,24,d 1260,36,34,f 1297,101,27,d 1272,120,42,h 1235,134,37,f 1211,85,36,f 1197,180,18 1229,192,20 1148,235,53,i 1193,271,49,i 1234,235,19,b 1303,22,12 1182,5,12 975,-10,6 1027,364,9 1074,386,6 980,408,33,d 1083,434,26,b 1108,467,14 1155,384,40,f 1175,507,7 1152,566,20,b 1122,578,6 1104,609,9 1263,165,8" }
];
const halos = document.getElementById("halos");
const bubbles = document.getElementById("bubbles");
for (const tile of TILES) {
  for (const item of tile.points.split(" ")) {
    const [x, y, r, level] = item.split(",");
    const cx = +x + tile.dx, cy = +y + tile.dy;
    add(halos, "circle", { cx, cy, r: +r + 11 });
    add(bubbles, "circle", { cx, cy, r, fill: RAMP[level || "a"] });
  }
}

// Suburb bars: name, bar top, colour
const BASE = 641, LEFT = 1575, STEP = 1237 / 30;
const BARS = [
  ["Cronulla", 241, "#e8806a"], ["Sydney", 271, "#d8534e"], ["Randwick", 275, "#e8806a"], ["Coogee", 277, "#db5b50"],
  ["Mosman", 319, "#e06856"], ["Bondi Beach", 337, "#cb4347"], ["Pyrmont", 339, "#cc4447"], ["Potts Point", 345, "#cd4748"],
  ["Surry Hills", 349, "#ea8a72"], ["Wentworth Point", 359, "#f4b1a2"], ["Neutral Bay", 373, "#e16a58"], ["Darlinghurst", 393, "#e37360"],
  ["Parramatta", 399, "#f6c0b4"], ["Elizabeth Bay", 417, "#cb4147"], ["Cremorne", 419, "#e3735f"], ["Bellevue Hill", 429, "#d8554f"],
  ["Chatswood", 429, "#e26d5b"], ["Rose Bay", 435, "#c53c43"], ["Hornsby", 443, "#f5b6aa"], ["Rhodes", 447, "#ef9a84"],
  ["Waterloo", 449, "#ef9d88"], ["Ryde", 455, "#f5b5a8"], ["Zetland", 459, "#ed937d"], ["Bondi", 461, "#e16c5a"],
  ["Breakfast Point", 463, "#de6453"], ["Maroubra", 467, "#ee9079"], ["Sutherland", 475, "#f5bbb0"], ["Ashfield", 481, "#f4b4a6"],
  ["Double Bay", 483, "#9c263b"], ["Camperdown", 483, "#ef9a84"]
];
const barChart = document.getElementById("bar-chart");
BARS.forEach(([name, top, fill], i) => {
  const x = Math.round(LEFT + i * STEP);
  add(barChart, "path", { class: "axis", d: `M${x} ${BASE}V${BASE + 10}` });
  add(barChart, "rect", { x: x + 5, y: top, width: 30, height: BASE - top, fill });
  add(barChart, "text", { class: "tick tick-end", transform: `translate(${x + 30} 652) rotate(-90)` }, name);
});

// Monthly sales: one x per month, one depth value per month and series
const MONTHS = [1070, 1144, 1221, 1296, 1371, 1449, 1518, 1595, 1669, 1746, 1820, 1897, 1973, 2048, 2125, 2200, 2275, 2353, 2425, 2501, 2575, 2652, 2727];
const SERIES = [
  ["#967662", "940,880,820,900,945,940,890,945,955,960,910,870,840,760,560,925,980,758,800,900,895,988,992"],
  ["#5b9792", "885,825,835,950,920,840,802,957,920,895,905,915,845,865,670,885,980,810,845,890,970,925,960"],
  ["#5778a4", "865,838,893,900,930,960,783,870,890,858,850,815,835,773,800,870,900,860,822,890,900,930,960"],
  ["#92bbb8", "858,815,830,935,862,872,880,915,895,860,880,870,840,790,765,860,817,812,735,860,794,838,925"],
  ["#c67594", "800,745,717,957,978,840,917,895,885,955,870,943,895,715,795,800,982,570,750,930,945,880,960"],
  ["#ebcf74", "897,900,735,880,990,915,890,930,920,885,885,912,875,690,765,890,895,800,650,935,860,860,940"],
  ["#a9cae6", "812,825,812,860,975,905,840,855,855,905,895,750,652,778,752,850,870,735,790,917,862,870,960"],
  ["#79706e", "865,650,825,945,968,930,825,900,715,945,965,840,875,558,652,868,915,750,758,982,852,825,930"],
  ["#b8b0ac", "665,810,820,870,960,884,874,920,952,950,875,803,798,797,625,830,920,525,730,880,885,893,968"],
  ["#cca6c6", "775,792,870,932,950,803,855,900,768,880,777,739,800,897,603,680,888,897,845,848,932,890,897"],
  ["#ebcf74", "788,664,678,780,975,880,855,940,928,905,985,860,790,485,680,830,915,645,630,850,958,947,985"],
  ["#a87c9f", "737,742,765,870,945,830,735,810,853,945,912,850,715,652,545,715,930,582,740,870,915,825,968"],
  ["#e49444", "778,822,788,805,958,868,897,911,930,921,815,820,852,540,262,790,942,549,692,850,903,858,887"],
  ["#6a9f58", "788,868,805,768,890,808,768,865,711,717,830,868,742,710,608,800,860,720,718,888,876,868,937"],
  ["#5778a4", "715,762,775,848,943,855,820,806,824,892,850,540,830,702,724,795,897,698,549,875,820,708,785"]
];
const lineChart = document.getElementById("line-chart");
for (const x of [993, 1221, 1449, 1669, 1897, 2125, 2353, 2575, 2803]) {
  add(lineChart, "path", { class: "axis", d: `M${x} 1270V1278` });
}
for (const [stroke, values] of SERIES) {
  const points = values.split(",").map((v, i) => `${MONTHS[i]},${Math.round(900 + v / 2.713)}`).join(" ");
  add(lineChart, "polyline", { class: "series", points, stroke });
}
```
